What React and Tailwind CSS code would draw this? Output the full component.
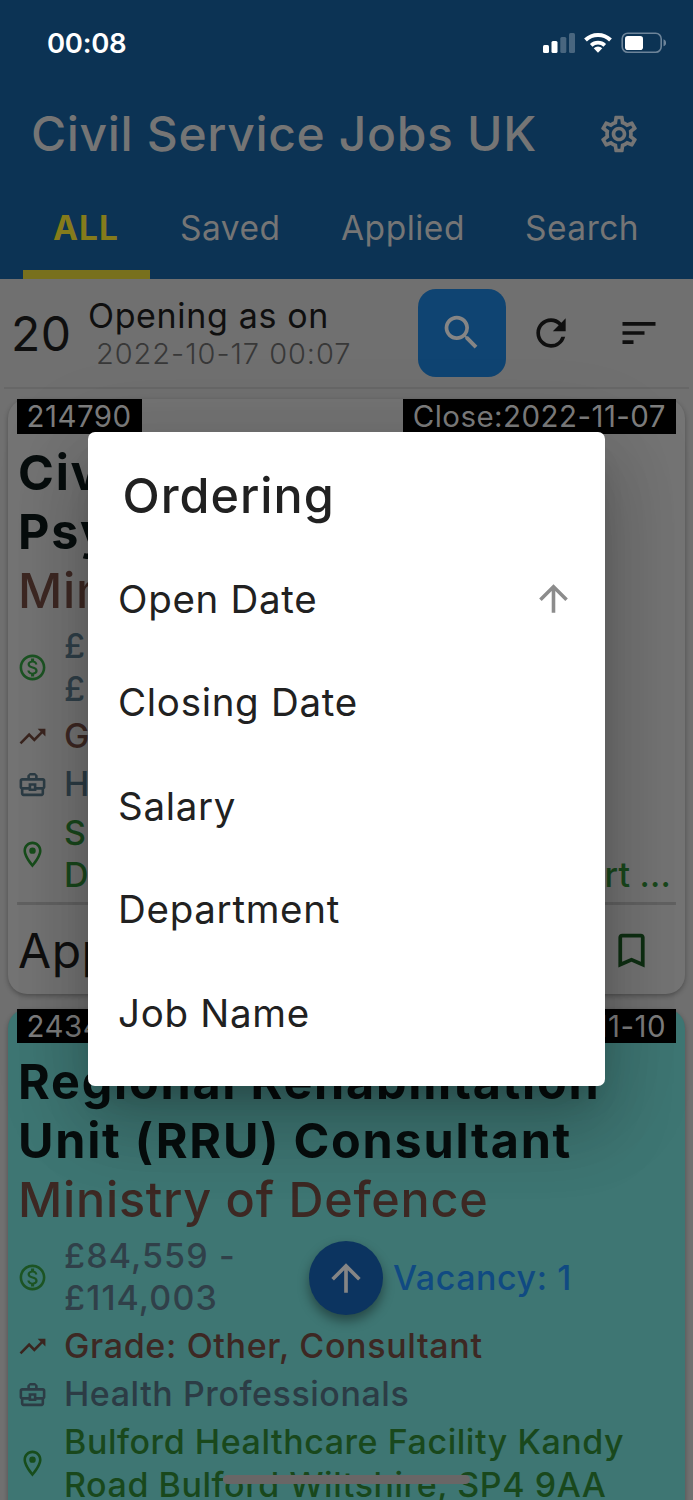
import React from "react";
import {
  MdOutlineSettings, MdSearch, MdRefresh, MdSort, MdOutlineMonetizationOn, MdTrendingUp,
  MdOutlineBusinessCenter, MdOutlineLocationOn, MdBookmarkBorder, MdArrowUpward,
} from "react-icons/md";

function StatusIcons() {
  return (
    <svg width="126" height="24" viewBox="0 0 126 24" className="mb-[2px] shrink-0">
      <g fill="#fff">
        <rect x="3" y="15" width="6" height="8" rx="1.5" />
        <rect x="11.5" y="11" width="6" height="12" rx="1.5" />
        <rect x="20.3" y="7" width="6" height="16" rx="1.5" opacity=".25" />
        <rect x="29" y="3" width="6" height="20" rx="1.5" opacity=".25" />
        <path d="M58 22.8l-4.3-4.5a6.3 6.3 0 0 1 8.6 0z" />
      </g>
      <path d="M51.2 15.3a10 10 0 0 1 13.6 0" fill="none" stroke="#fff" strokeWidth="3.8" />
      <path d="M45.5 10a18 18 0 0 1 25 0" fill="none" stroke="#fff" strokeWidth="4" />
      <rect x="82.2" y="3.2" width="39" height="19" rx="5.5" fill="none" stroke="#6d8499" strokeWidth="1.6" />
      <rect x="85" y="6" width="18" height="14" rx="2.8" fill="#fff" />
      <path d="M123.5 9.3c3.6 1.6 3.6 5.4 0 7z" fill="#6d8499" />
    </svg>
  );
}

function Header() {
  return (
    <header className="flex h-[279px] shrink-0 flex-col bg-[#0c3354] text-[#757575]">
      <div className="flex h-[85px] items-center justify-between pr-[27px] pl-[47px]">
        <span className="pt-[2px] text-[27.5px] font-semibold tracking-[-0.3px] text-white">00:08</span>
        <StatusIcons />
      </div>
      <div className="flex h-[98px] items-center justify-between pr-[52px] pl-[31px]">
        <h1 className="text-[48px] font-medium tracking-[0.65px] whitespace-nowrap">Civil Service Jobs UK</h1>
        <MdOutlineSettings className="size-[44px]" />
      </div>
      <nav className="flex h-[96px] pl-[23px] text-[33.5px] tracking-[0.5px]">
        <div className="flex w-[127px] flex-col border-b-[9px] border-[#78701d] text-[#857b1b]">
          <span className="h-[87px] pr-px text-center leading-[90px] font-bold tracking-[1px]">ALL</span>
        </div>
        <span className="w-[161px] pl-[30px] leading-[90px]">Saved</span>
        <span className="w-[184px] pl-[30px] leading-[90px]">Applied</span>
        <span className="pl-[30px] leading-[90px]">Search</span>
      </nav>
    </header>
  );
}

function Toolbar() {
  return (
    <div className="mx-1 flex h-[110px] shrink-0 items-center border-b-2 border-[#676767] text-[#0f0f0f]">
      <span className="w-[84px] shrink-0 pt-[2px] pl-[7px] text-[48px] tracking-[0.5px]">20</span>
      <div className="w-[330px] shrink-0 pt-[3px] whitespace-nowrap">
        <div className="h-[38px] text-[34px] leading-[38px] tracking-[0.65px]">Opening as on</div>
        <div className="h-[38px] pl-[8px] text-[29px] leading-[38px] font-light tracking-[0.95px] text-[#383838]">2022-10-17 00:07</div>
      </div>
      <div className="flex size-[88px] shrink-0 items-center justify-center rounded-[18px] bg-[#0f4472] pr-px pb-px text-[#858585]">
        <MdSearch className="size-[45px]" />
      </div>
      <MdRefresh className="ml-[23px] size-[44px]" />
      <MdSort className="ml-[44px] size-[44px]" />
    </div>
  );
}

function Chip({ children }) {
  return <span className="h-[34.5px] bg-black pr-[10px] pl-[9.5px] text-[29.5px] leading-[35px] tracking-[0.45px] text-[#7d7d7d]">{children}</span>;
}

function Detail({ icon: Icon, iconColor, className, children }) {
  return (
    <div className={"flex items-center leading-[42.5px] " + className}>
      <Icon className={"mr-4 size-[31px] shrink-0 " + iconColor} />
      <div className="whitespace-nowrap">{children}</div>
    </div>
  );
}

function JobCard({ job, className }) {
  return (
    <article className={"mx-2 flex h-[595px] shrink-0 flex-col rounded-[19px] px-[9px] text-[34px] font-medium tracking-[0.55px] shadow-[0_2px_5px_rgba(0,0,0,0.3)] " + className}>
      <div className="flex justify-between font-normal">
        <Chip>{job.id}</Chip>
        <Chip>Close:{job.close}</Chip>
      </div>
      <div className="mt-[9px] pl-[1px] text-[48.5px] leading-[59px] whitespace-nowrap">
        <h2 className="font-bold tracking-[1.75px] text-[#070d0d]">
          {job.title.map((line) => <div key={line}>{line}</div>)}
        </h2>
        <div className="tracking-[0.75px] text-[#3d2823]">{job.department}</div>
      </div>
      <div className="flex flex-col">
        <div className="flex h-[93px] items-center pt-[3px]">
          <Detail icon={MdOutlineMonetizationOn} iconColor="text-[#1c5423]" className="w-[376px] tracking-[1.1px] text-[#304049]">
            {job.salary.map((line) => <div key={line}>{line}</div>)}
          </Detail>
          <span className="text-[#104a82]">Vacancy: 1</span>
        </div>
        <Detail icon={MdTrendingUp} iconColor="text-[#3a251f]" className="h-[48px] tracking-[0.65px] text-[#3d2823]">{job.grade}</Detail>
        <Detail icon={MdOutlineBusinessCenter} iconColor="text-[#2c3c45]" className="h-[48px] text-[#2c3c45]">{job.profession}</Detail>
        <Detail icon={MdOutlineLocationOn} iconColor="text-[#174d1b]" className="h-[91px] text-[#19481c]">
          {job.location.map((line, i) => <div key={i}>{line}</div>)}
        </Detail>
      </div>
      <div className="mt-[2.5px] h-[3px] shrink-0 bg-[#626262]" />
      <div className="flex h-[90px] shrink-0 items-center justify-between pr-[22px] pl-[1px] text-[48px] text-[#0f0f0f]">
        <span className="pt-px font-normal">Apply</span>
        <MdBookmarkBorder className="size-[45px] text-[#0e2f12]" />
      </div>
    </article>
  );
}

const jobs = [
  {
    id: "214790", close: "2022-11-07", title: ["Civ", "Psy"], department: "Min",
    salary: ["£", "£ "], grade: "G", profession: "H",
    location: ["S", <span className="flex w-[607px] justify-between"><span>D</span><span className="tracking-[0.2px]">rt ...</span></span>],
  },
  {
    id: "243412", close: "2022-11-10", title: ["Regional Rehabilitation", "Unit (RRU) Consultant"],
    department: "Ministry of Defence", salary: ["£84,559 -", "£114,003"], grade: "Grade: Other, Consultant",
    profession: "Health Professionals", location: ["Bulford Healthcare Facility Kandy", "Road Bulford Wiltshire, SP4 9AA"],
  },
];

function OrderingDialog() {
  const options = ["Open Date", "Closing Date", "Salary", "Department", "Job Name"];
  return (
    <div role="dialog" className="absolute top-[432px] left-[88px] h-[654px] w-[517px] rounded-[7px] bg-white pt-[31px] text-[#212121] shadow-[0_20px_28px_-13px_rgba(0,0,0,0.2),0_44px_70px_5px_rgba(0,0,0,0.14),0_17px_85px_15px_rgba(0,0,0,0.12)]">
      <h2 className="h-[66px] pl-[34.5px] text-[48.5px] leading-[66px] font-medium tracking-[1px]">Ordering</h2>
      <ul className="mt-[19px] text-[38.5px] tracking-[0.7px]">
        {options.map((option, i) => (
          <li key={option} className="flex h-[103.5px] items-center justify-between pr-[30px] pl-[30px]">
            <span>{option}</span>
            {i === 0 && <MdArrowUpward className="mb-[2px] size-[43px] text-[#8c8c8c]" />}
          </li>
        ))}
      </ul>
    </div>
  );
}

export default function App() {
  return (
    <div className="relative flex h-[1500px] w-[693px] flex-col overflow-hidden bg-[#707070] font-['Inter',sans-serif]">
      <Header />
      <Toolbar />
      <div className="mt-[10px] flex flex-col gap-[14.5px]">
        <JobCard job={jobs[0]} className="bg-[#747474]" />
        <JobCard job={jobs[1]} className="bg-[#3e7673]" />
      </div>
      <div className="absolute top-[1241px] left-[309px] flex size-[74px] items-center justify-center rounded-full bg-[#0c3460] text-[#858585] shadow-[0_6px_12px_rgba(0,0,0,0.4)]">
        <MdArrowUpward className="size-[44px]" />
      </div>
      <OrderingDialog />
      <div className="absolute top-[1475px] left-[223px] h-[9px] w-[247px] rounded-full bg-[#696666]" />
    </div>
  );
}
